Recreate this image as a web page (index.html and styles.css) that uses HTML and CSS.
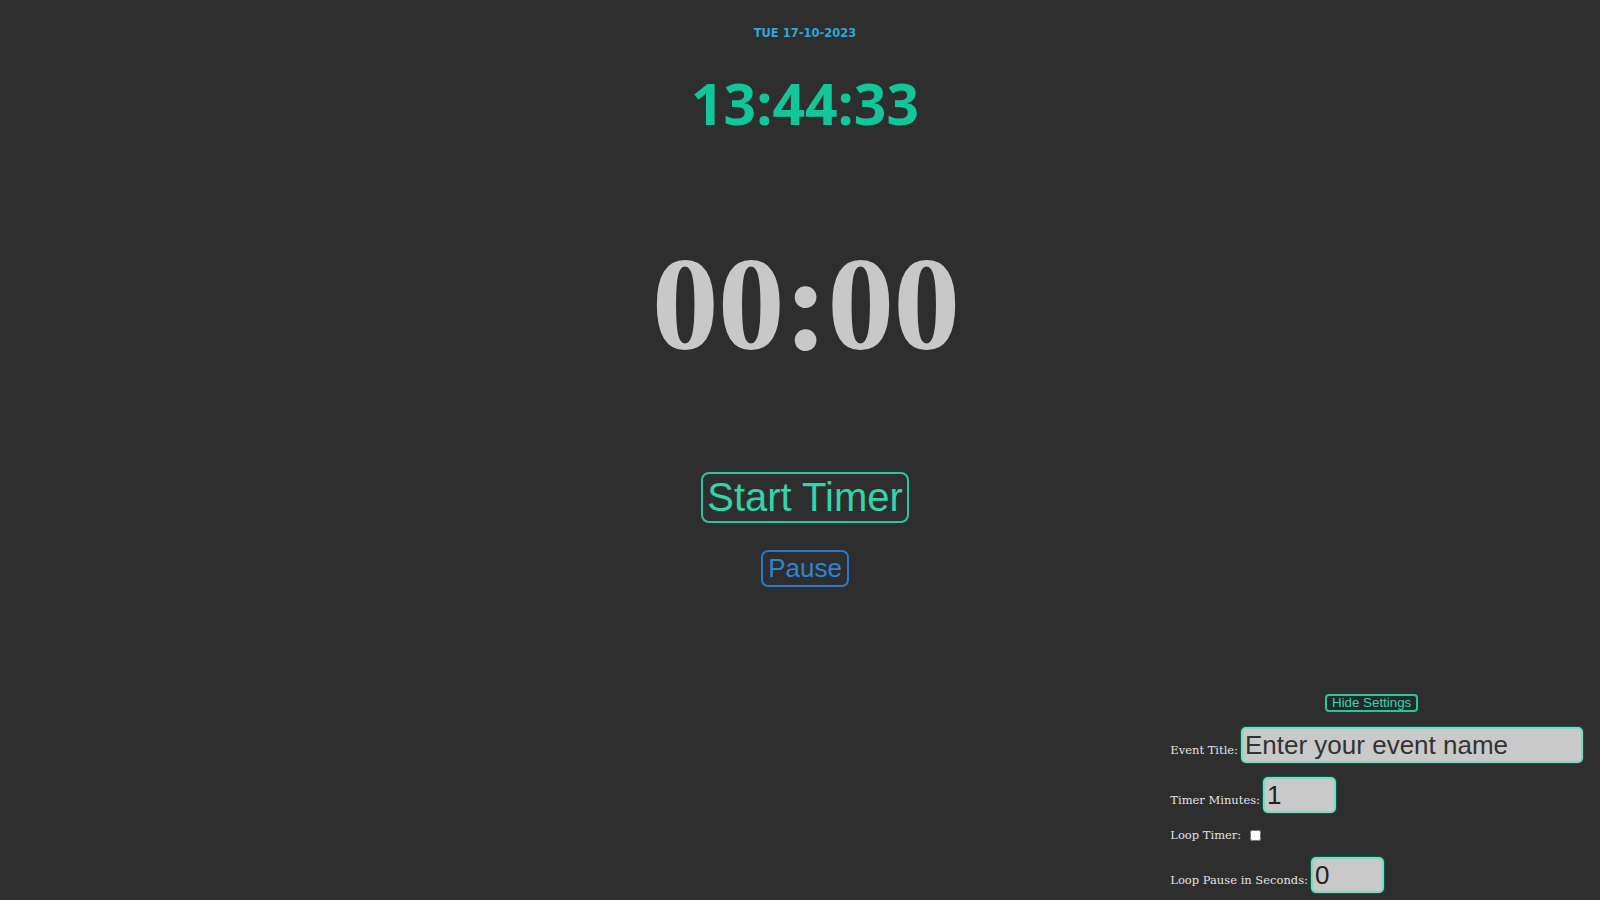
FILE: index.html
```html
<!DOCTYPE html>
<html lang="en">
<head>
<meta charset="utf-8">
<title>Timer</title>
<link rel="stylesheet" href="styles.css">
</head>
<body>
<main class="main">
  <div class="date">TUE 17-10-2023</div>
  <div class="clock">13:44:33</div>
  <div class="timer">00:00</div>
  <button class="btn btn-start">Start Timer</button>
  <button class="btn btn-pause">Pause</button>
</main>
<section class="settings">
  <button class="btn-hide">Hide Settings</button>
  <div class="row">
    <label class="lbl" for="title">Event Title:</label>
    <input class="field field-wide" id="title" type="text" placeholder="Enter your event name">
  </div>
  <div class="row">
    <label class="lbl" for="mins">Timer Minutes:</label>
    <input class="field field-small" id="mins" type="text" value="1">
  </div>
  <div class="row row-check">
    <label class="lbl" for="loop">Loop Timer:</label>
    <input class="check" id="loop" type="checkbox">
  </div>
  <div class="row">
    <label class="lbl" for="pause">Loop Pause in Seconds:</label>
    <input class="field field-small" id="pause" type="text" value="0">
  </div>
</section>
</body>
</html>
```
FILE: styles.css
```css
* { box-sizing: border-box; }
html, body { margin: 0; padding: 0; }
body {
  background: #2e2e2e;
  height: 900px;
  overflow: hidden;
  display: flex;
  flex-direction: column;
  font-family: "DejaVu Serif", serif;
}
.main {
  display: flex;
  flex-direction: column;
  align-items: center;
  padding-top: 26px;
  padding-left: 10px;
}
.date {
  font-family: "DejaVu Sans", sans-serif;
  font-weight: 700;
  font-size: 11.5px;
  line-height: 14px;
  height: 14px;
  color: #2ea6d8;
}
.clock {
  margin-top: 35px;
  font-family: "Open Sans", sans-serif;
  font-weight: 700;
  font-size: 57px;
  line-height: 57px;
  height: 57px;
  color: #12c699;
}
.timer {
  margin-top: 105px;
  font-family: "Liberation Serif", serif;
  font-weight: 700;
  font-size: 134px;
  line-height: 134px;
  height: 135px;
  letter-spacing: -1px;
  margin-right: -1px;
  color: #c8c8c8;
}
.btn {
  background: transparent;
  font-family: "Liberation Sans", Arial, sans-serif;
  border-style: solid;
  border-width: 2px;
  cursor: pointer;
}
.btn-start {
  margin-top: 100px;
  font-size: 40px;
  line-height: 45px;
  padding: 1px 4px;
  color: #33d3ab;
  border-color: #2ec39f;
  border-radius: 8px;
}
.btn-pause {
  margin-top: 27px;
  font-size: 26px;
  line-height: 31px;
  padding: 1px 5px;
  color: #2f83d6;
  border-color: #2a78c8;
  border-radius: 7px;
}
.settings {
  margin-top: auto;
  align-self: flex-end;
  margin-right: 17px;
  padding-bottom: 7px;
  display: flex;
  flex-direction: column;
  gap: 14px;
}
.btn-hide {
  align-self: center;
  margin-right: 10px;
  margin-bottom: 1px;
  font-family: "Liberation Sans", Arial, sans-serif;
  font-size: 13.33px;
  line-height: 14px;
  height: 18px;
  padding: 0 5px;
  color: #3bd1ad;
  background: #232b29;
  border: 2px solid #2ec39f;
  border-radius: 4px;
}
.row {
  display: flex;
  align-items: baseline;
  gap: 3px;
}
.lbl {
  font-family: "DejaVu Serif", serif;
  font-size: 11.5px;
  color: #e2e2e2;
  white-space: nowrap;
}
.field {
  flex-shrink: 0;
  height: 36px;
  background: #c9c9c9;
  border: 2px solid #7fd8c3;
  box-shadow: 0 0 0 1px #0e5b4b;
  border-radius: 5px;
  font-family: "Liberation Sans", Arial, sans-serif;
  font-size: 26px;
  color: #222;
  padding: 0 2px;
  outline: none;
}
.field::placeholder { color: #333; opacity: 1; }
.field-wide { width: 342px; }
.field-small { width: 73px; }
.row-check {
  height: 16px;
  align-items: center;
}
.check {
  margin: 0 0 0 6px;
  width: 11px;
  height: 11px;
}
```
